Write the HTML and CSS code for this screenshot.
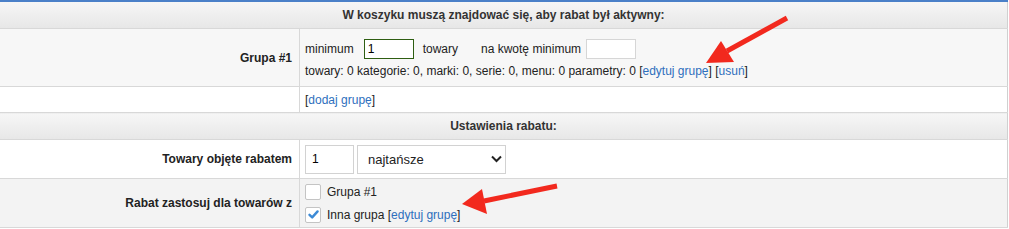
FILE: index.html
```html
<!DOCTYPE html>
<html lang="pl">
<head>
    <meta charset="UTF-8">
    <title>Rabat - ustawienia</title>
    <link rel="stylesheet" href="styles.css">
</head>
<body>
    <div class="panel">
        <table class="form-table">
            <tr class="head">
                <th colspan="2">W koszyku muszą znajdować się, aby rabat był aktywny:</th>
            </tr>
            <tr class="row-grey">
                <td class="label">Grupa #1</td>
                <td class="value">
                    <div class="line">
                        <span>minimum</span>
                        <input type="text" class="field focus" value="1">
                        <span class="gap-l">towary</span>
                        <span class="gap-xl">na kwotę minimum</span>
                        <input type="text" class="field">
                    </div>
                    <div class="line small">
                        towary: 0 kategorie: 0, marki: 0, serie: 0, menu: 0 parametry: 0
                        [<a href="#">edytuj grupę</a>] [<a href="#">usuń</a>]
                    </div>
                </td>
            </tr>
            <tr class="row-white short">
                <td class="label"></td>
                <td class="value">[<a href="#">dodaj grupę</a>]</td>
            </tr>
            <tr class="head">
                <th colspan="2">Ustawienia rabatu:</th>
            </tr>
            <tr class="row-white tall">
                <td class="label">Towary objęte rabatem</td>
                <td class="value">
                    <div class="controls">
                        <input type="text" class="field big" value="1">
                        <div class="select">
                            <span>najtańsze</span>
                            <svg width="11" height="8" viewBox="0 0 11 8"><path d="M1 1.5 L5.5 6 L10 1.5" fill="none" stroke="#222" stroke-width="2"/></svg>
                        </div>
                    </div>
                </td>
            </tr>
            <tr class="row-light">
                <td class="label">Rabat zastosuj dla towarów z</td>
                <td class="value">
                    <div class="check-line">
                        <span class="check"></span>
                        <span>Grupa #1</span>
                    </div>
                    <div class="check-line">
                        <span class="check">
                            <svg width="13" height="13" viewBox="0 0 13 13"><path d="M2.5 6.8 L5.2 9.4 L10.6 3.4" fill="none" stroke="#3b8ad6" stroke-width="2.4" stroke-linecap="round" stroke-linejoin="round"/></svg>
                        </span>
                        <span>Inna grupa [<a href="#">edytuj grupę</a>]</span>
                    </div>
                </td>
            </tr>
        </table>

        <!-- red arrows pointing at the links -->
        <svg class="arrows" width="1009" height="229" viewBox="0 0 1009 229">
            <line x1="787" y1="18" x2="727" y2="51" stroke="#f2291e" stroke-width="5"/>
            <polygon points="706,63 721,41 734,62" fill="#f2291e"/>
            <line x1="557" y1="186" x2="484" y2="201" stroke="#f2291e" stroke-width="5"/>
            <polygon points="462,204 482,189 487,214" fill="#f2291e"/>
        </svg>
    </div>
</body>
</html>
```

FILE: styles.css
```css
body {
    margin: 0;
    padding: 0;
    background: #fff;
    font-family: "Liberation Sans", Arial, sans-serif;
    font-size: 12px;
    color: #222;
}
.panel {
    position: relative;
    width: 1009px;
    height: 229px;
    overflow: hidden;
}
.form-table {
    width: 1008px;
    border-collapse: collapse;
    border-top: 2px solid #4a80c8;
    border-right: 1px solid #d0d0d0;
}
.form-table td,
.form-table th {
    border-bottom: 1px solid #d8d8d8;
    padding: 0;
}
.head th {
    height: 26px;
    background: linear-gradient(#f6f6f6, #e7e7e7);
    font-weight: bold;
    color: #333;
    text-align: center;
}
.label {
    width: 292px;
    padding-right: 7px !important;
    border-right: 1px solid #d8d8d8;
    text-align: right;
    font-weight: bold;
    color: #222;
}
.value {
    padding-left: 5px !important;
}
.row-grey td {
    background: #f7f7f7;
    height: 57px;
}
.row-white td {
    background: #fff;
}
.short td {
    height: 25px;
}
.tall td {
    height: 38px;
}
.row-light td {
    background: #f3f3f3;
    height: 48px;
}
a {
    color: #2e6fbd;
    text-decoration: none;
}
.line {
    display: flex;
    align-items: center;
    height: 22px;
}
.line.small {
    display: block;
    height: auto;
    margin-top: 4px;
}
.field {
    box-sizing: border-box;
    width: 50px;
    height: 20px;
    margin: 0 0 0 10px;
    padding: 0 3px;
    border: 1px solid #d6d6d6;
    background: #fff;
    font-family: inherit;
    font-size: 12px;
    outline: none;
}
.field.focus {
    border-color: #2e5e12;
}
.gap-l {
    margin-left: 9px;
}
.gap-xl {
    margin-left: 23px;
}
.gap-xl + .field {
    margin-left: 5px;
}
.controls {
    display: flex;
    gap: 3px;
}
.field.big {
    width: 49px;
    height: 29px;
    margin: 0;
    padding: 0 6px;
    border-color: #d2d2d2;
}
.select {
    box-sizing: border-box;
    width: 149px;
    height: 29px;
    padding: 0 3px 0 10px;
    border: 1px solid #d2d2d2;
    background: #fff;
    display: flex;
    align-items: center;
    justify-content: space-between;
    font-size: 13px;
}
.check-line {
    display: flex;
    align-items: center;
    gap: 6px;
    height: 23px;
}
.check {
    box-sizing: border-box;
    width: 16px;
    height: 16px;
    border: 1px solid #c4c4c4;
    border-radius: 2px;
    background: #fff;
    display: flex;
    align-items: center;
    justify-content: center;
}
.arrows {
    position: absolute;
    left: 0;
    top: 0;
    pointer-events: none;
}
```
